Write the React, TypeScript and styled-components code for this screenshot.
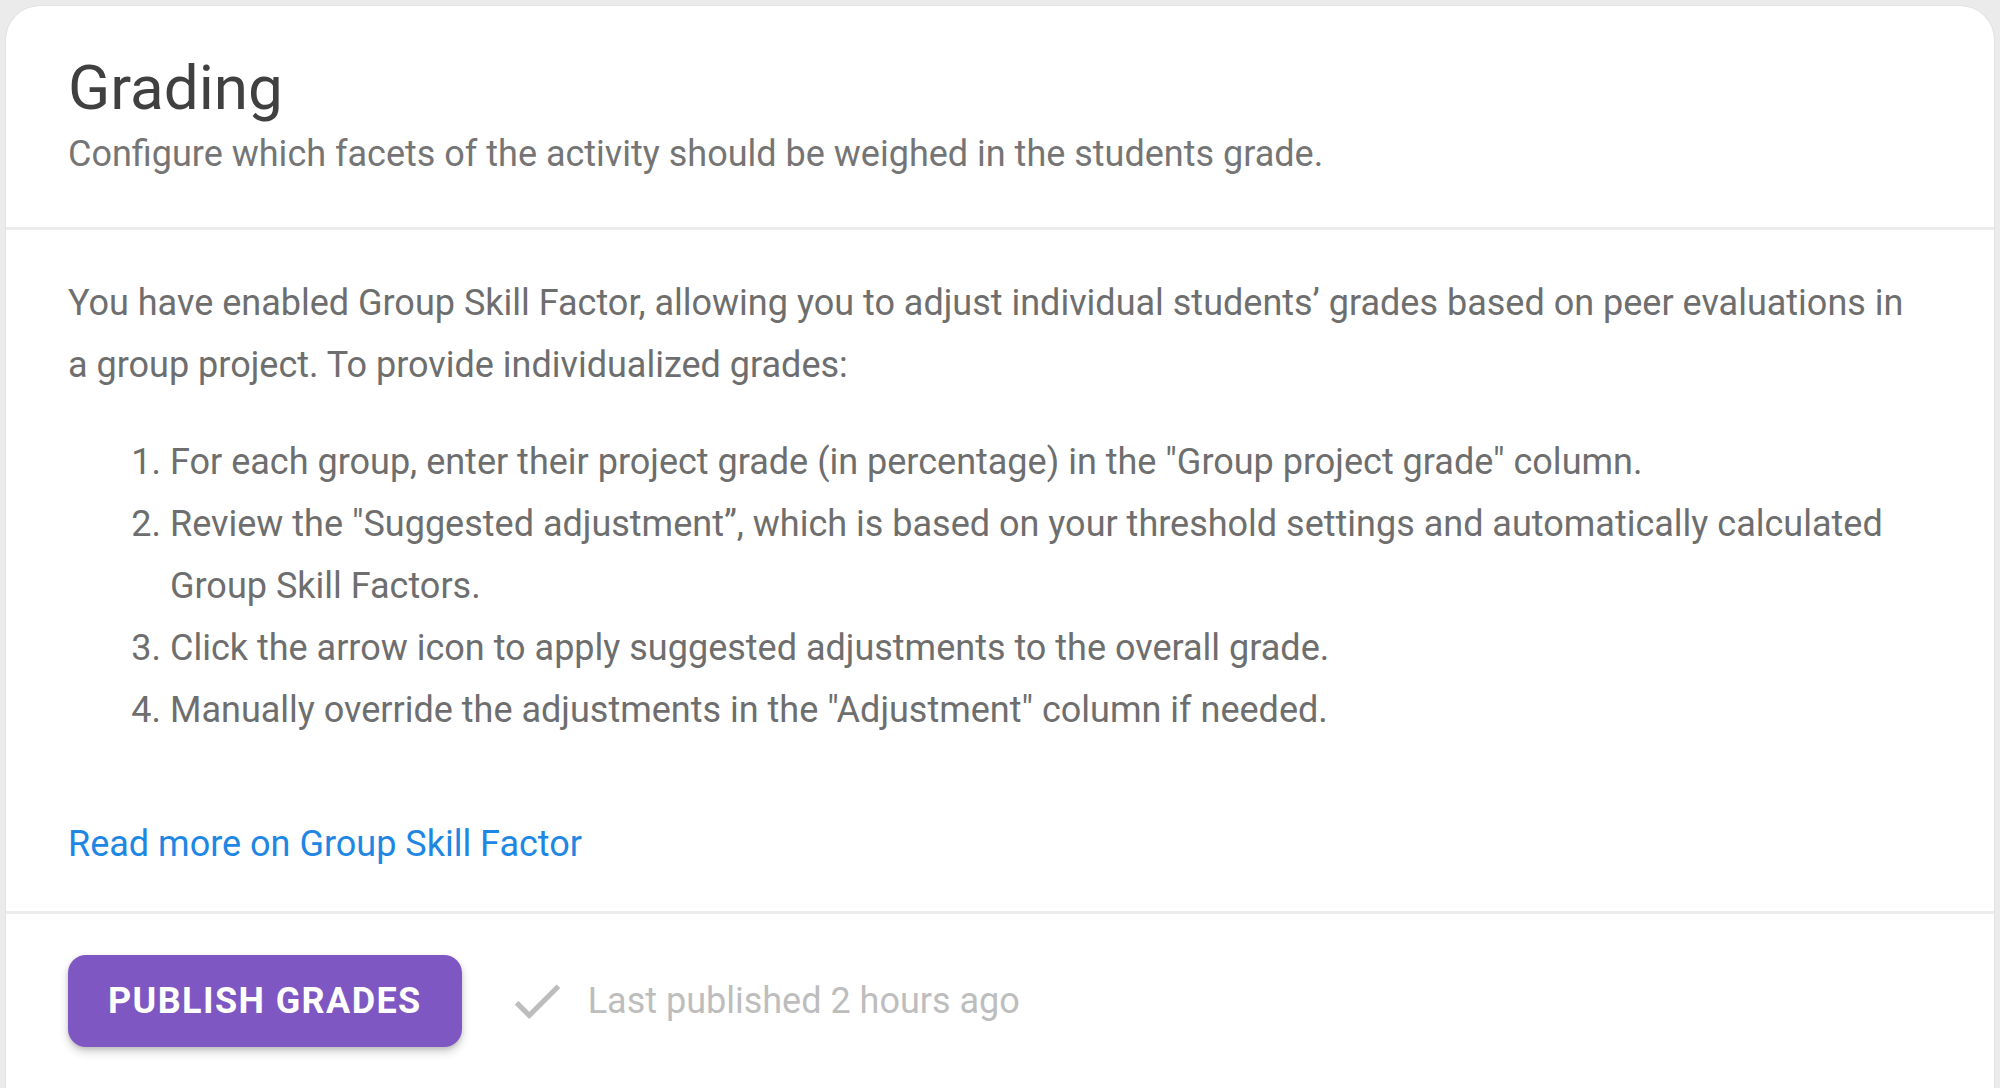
import React from 'react';
import styled, { createGlobalStyle } from 'styled-components';

const GlobalStyle = createGlobalStyle`
  html, body {
    margin: 0;
    padding: 0;
    background: #ebebeb;
  }
  body {
    font-family: Roboto, "Noto Sans", "Liberation Sans", sans-serif;
    -webkit-font-smoothing: antialiased;
  }
  * {
    box-sizing: border-box;
  }
`;

const Page = styled.div`
  min-height: 1088px;
  padding: 5px 5px 0;
`;

const Card = styled.section`
  background: #fff;
  border: 1px solid #e2e2e2;
  border-bottom: none;
  border-radius: 35px 35px 0 0;
  min-height: 1083px;
`;

const Section = styled.div<{ $top: number; $bottom: number }>`
  padding: ${({ $top }) => $top}px 90px ${({ $bottom }) => $bottom}px 62px;
  border-bottom: 3px solid #ececec;

  &:last-child {
    border-bottom: none;
  }
`;

const Title = styled.h1`
  margin: 0;
  font-size: 62px;
  line-height: 72px;
  font-weight: 400;
  color: #404040;
`;

const Subtitle = styled.p`
  margin: 5px 0 0;
  font-size: 36px;
  line-height: 50px;
  color: #757575;
`;

const Body = styled.p`
  margin: 0;
  font-size: 36px;
  line-height: 62px;
  color: #6e6e6e;
`;

const Steps = styled.ol`
  margin: 35px 0 0;
  padding-left: 102px;
  font-size: 36px;
  line-height: 62px;
  color: #6e6e6e;
`;

const Step = styled.li`
  padding-left: 0;
`;

const MoreLink = styled.a`
  display: inline-block;
  margin-top: 72px;
  font-size: 36px;
  line-height: 62px;
  color: #1e86e3;
  text-decoration: none;
`;

const Footer = styled.div`
  display: flex;
  align-items: center;
  gap: 44px;
`;

const PublishButton = styled.button`
  height: 92px;
  padding: 0 40px;
  border: none;
  border-radius: 18px;
  background: #7e57c2;
  color: #fff;
  font-family: Roboto, "Noto Sans", "Liberation Sans", sans-serif;
  font-size: 36px;
  font-weight: 700;
  letter-spacing: 1.4px;
  text-transform: uppercase;
  box-shadow: 0 5px 10px rgba(0, 0, 0, 0.18), 0 2px 4px rgba(0, 0, 0, 0.12);
  cursor: pointer;
`;

const Status = styled.div`
  display: flex;
  align-items: center;
  gap: 20px;
  font-size: 36px;
  color: #bdbdbd;
`;

const CheckIcon = () => (
  <svg width="62" height="62" viewBox="0 0 24 24" fill="#bdbdbd" aria-hidden="true">
    <path d="M9 16.17L4.83 12l-1.42 1.41L9 19 21 7l-1.41-1.41z" />
  </svg>
);

export default function App() {
  return (
    <>
      <GlobalStyle />
      <Page>
        <Card>
          <Section $top={46} $bottom={48}>
            <Title>Grading</Title>
            <Subtitle>Configure which facets of the activity should be weighed in the students grade.</Subtitle>
          </Section>
          <Section $top={42} $bottom={36}>
            <Body>
              You have enabled Group Skill Factor, allowing you to adjust individual students’ grades based on peer
              evaluations in a group project. To provide individualized grades:
            </Body>
            <Steps>
              <Step>For each group, enter their project grade (in percentage) in the "Group project grade" column.</Step>
              <Step>
                Review the "Suggested adjustment”, which is based on your threshold settings and automatically
                calculated Group Skill Factors.
              </Step>
              <Step>Click the arrow icon to apply suggested adjustments to the overall grade.</Step>
              <Step>Manually override the adjustments in the "Adjustment" column if needed.</Step>
            </Steps>
            <MoreLink href="#">Read more on Group Skill Factor</MoreLink>
          </Section>
          <Section $top={41} $bottom={40}>
            <Footer>
              <PublishButton>Publish grades</PublishButton>
              <Status>
                <CheckIcon />
                Last published 2 hours ago
              </Status>
            </Footer>
          </Section>
        </Card>
      </Page>
    </>
  );
}
